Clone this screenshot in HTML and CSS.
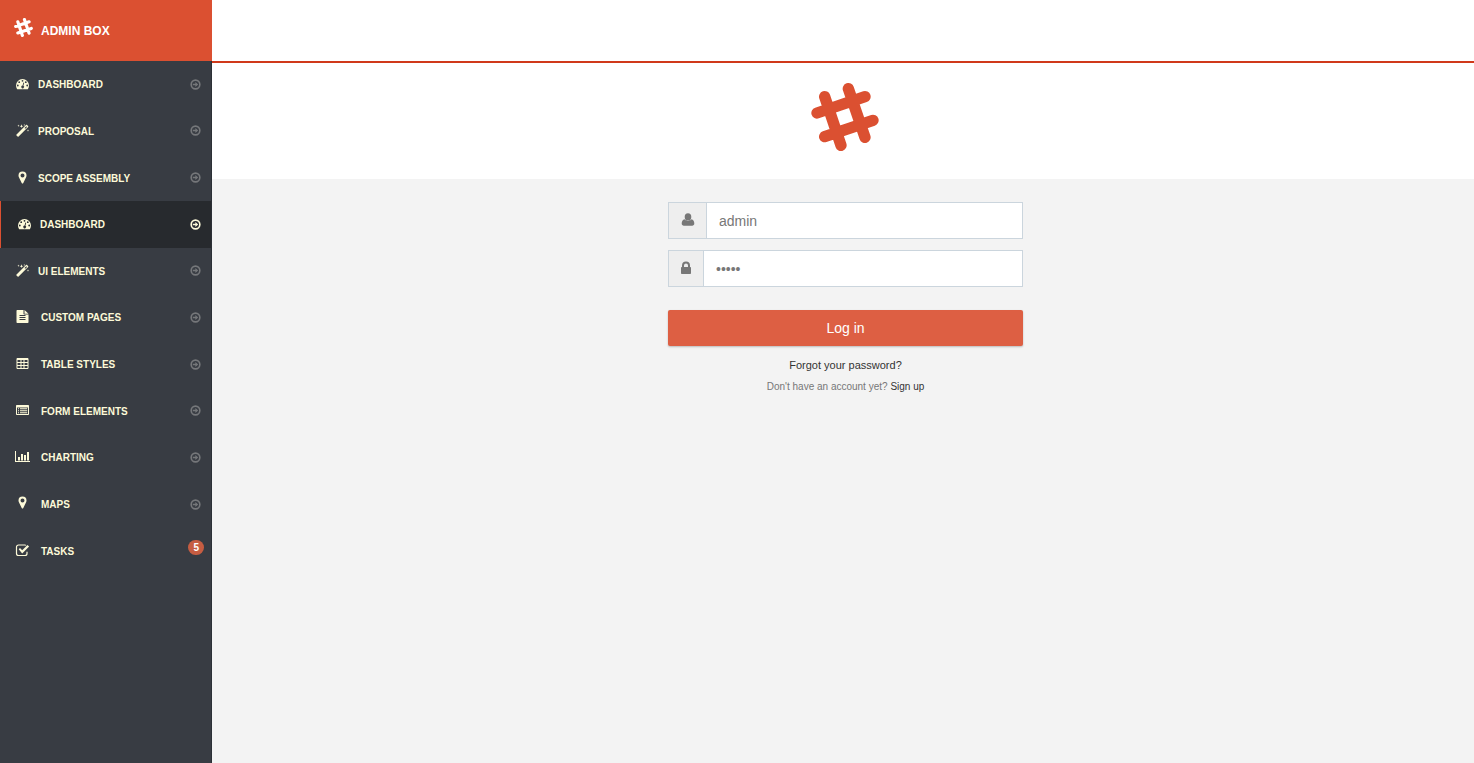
FILE: index.html
```html
<!DOCTYPE html>
<html lang="en">
<head>
<meta charset="utf-8">
<title>Admin Box</title>
<link rel="stylesheet" href="styles.css">
</head>
<body>
<svg class="sprite" aria-hidden="true">
  <symbol id="hash" viewBox="0 0 204 204"><path d="M41 41 90 187M112 17l50 146M18 90l144-49M41 161l145-49" fill="none" stroke="currentColor" stroke-width="34" stroke-linecap="round"/></symbol>
  <symbol id="gauge" viewBox="0 0 14 14"><path fill-rule="evenodd" d="M7 2a6.500 6.500 0 0 1 6.500 6.500c0 1.300-.4 2.500-1 3.500-.1.200-.3.300-.5.300H2c-.2 0-.4-.1-.5-.3-.6-1-1-2.200-1-3.500A6.500 6.500 0 0 1 7 2zM2.300 7.600a.9.900 0 1 0 0 1.800.9.900 0 0 0 0-1.800zM3.700 4.300a.9.900 0 1 0 0 1.800.9.900 0 0 0 0-1.800zM7 2.900a.9.900 0 1 0 0 1.800.9.900 0 0 0 0-1.800zM10.300 4.300a.9.900 0 1 0 0 1.800.9.900 0 0 0 0-1.800zM11.700 7.600a.9.900 0 1 0 0 1.800.9.900 0 0 0 0-1.800zM7.900 5.500 7.100 8.600a1.400 1.400 0 1 0 .8.200l.8-3.100z"/></symbol>
  <symbol id="wand" viewBox="0 1 14 14"><path fill-rule="evenodd" d="M1 11.500 10.500 2c.3-.3.700-.3 1 0l1.100 1.100c.3.300.3.700 0 1L3.100 13.600c-.3.300-.7.300-1 0L1 12.500c-.3-.3-.3-.7 0-1zM9 5.100l.7.700 1.900-1.900-.7-.7zM3 1.500l.3.900.9.300-.9.300L3 3.900 2.700 3l-.9-.3.900-.3zM6 1.300l.5 1.400 1.400.5-1.400.5L6 5.100l-.5-1.400-1.400-.5 1.400-.5zM8.800 1l.2.700.7.200-.7.300-.2.700-.3-.7-.7-.3.7-.2zM12.500 6.300l.3.900.9.300-.9.300-.3.900-.3-.9-.9-.3.900-.3z"/></symbol>
  <symbol id="marker" viewBox="0 0 14 14"><path fill-rule="evenodd" d="M7 .5a4 4 0 0 1 4 4c0 .6-.1 1.100-.3 1.600l-2.900 5.900c-.3.700-1.300.7-1.600 0L3.300 6.100C3.100 5.600 3 5.100 3 4.500a4 4 0 0 1 4-4zm0 2a2 2 0 1 0 0 4 2 2 0 0 0 0-4z"/></symbol>
  <symbol id="file" viewBox="0 0 14 14"><path fill-rule="evenodd" d="M1.700 1H8v3.700c0 .4.300.8.800.8H13v7.700c0 .4-.3.800-.8.800H1.700c-.4 0-.7-.4-.7-.8V1.800c0-.4.300-.8.700-.8zM9 1l4 3.700H9zM4 6v1h6V6zm0 2v1h6V8zm0 2v1h6v-1z"/></symbol>
  <symbol id="table" viewBox="0 0 14 14"><path fill-rule="evenodd" d="M2 2h10c.5 0 1 .5 1 1v9c0 .5-.5 1-1 1H2c-.5 0-1-.5-1-1V3c0-.5.500-1 1-1zM2 4v2h3V4zm4 0v2h2V4zm3 0v2h3V4zM2 7v2h3V7zm4 0v2h2V7zm3 0v2h3V7zM2 10v2h3v-2zm4 0v2h2v-2zm3 0v2h3v-2z"/></symbol>
  <symbol id="list" viewBox="0 0 14 14"><path fill-rule="evenodd" d="M1.500 2h11c.6 0 1 .4 1 1v8c0 .6-.4 1-1 1h-11c-.6 0-1-.4-1-1V3c0-.6.400-1 1-1zM1.500 4.500V11h11V4.500zM2.500 5.300h1v1h-1zm2 0h7.200v1H4.500zm-2 2h1v1h-1zm2 0h7.200v1H4.500zm-2 2h1v1h-1zm2 0h7.200v1H4.500z"/></symbol>
  <symbol id="chart" viewBox="0 0 15 14"><path d="M0 2h1v10h14v1H0zM3 8h2v3.500H3zM6 5h2v6.500H6zM9 6h2v5.500H9zM12 3h2v8.500h-2z"/></symbol>
  <symbol id="check" viewBox="0 0 14 14"><path d="M10.500 2.300C10.200 2 9.800 2 9.400 2H3a2 2 0 0 0-2 2v6.500a2 2 0 0 0 2 2h6.500a2 2 0 0 0 2-2V8.700" fill="none" stroke="currentColor" stroke-width="1.200"/><path d="m3.200 6.300 1.300-1.300 2.200 2.200L12 1.900l1.600 1.600L6.700 10.400z"/></symbol>
  <symbol id="go" viewBox="0 0 12 12"><circle cx="6" cy="6" r="4" fill="none" stroke="currentColor" stroke-width="1.500"/><path d="M3.500 5.300h2.400V3.700L8.500 6 5.900 8.300V6.700H3.500z"/></symbol>
  <symbol id="user" viewBox="0 0 14 14"><path d="M7 .3a3.300 3.600 0 1 1 0 7.200A3.300 3.600 0 0 1 7 .3zM3.600 6.300C4.500 7.400 5.700 7.900 7 7.900s2.500-.5 3.400-1.600c2 .1 2.900 2.300 2.900 4.300 0 1.300-.9 2.100-2.100 2.100H2.800C1.600 12.700.7 11.900.7 10.600c0-2 .9-4.200 2.900-4.300z"/></symbol>
  <symbol id="lock" viewBox="0 0 14 14"><path fill-rule="evenodd" d="M3 6V4.600a4 4 0 0 1 8 0V6h.2c.5 0 .8.400.8.800v5.400c0 .4-.3.800-.8.800H2.800c-.5 0-.8-.4-.8-.8V6.800c0-.4.300-.8.800-.8zm2 0h4V4.600a2 2 0 0 0-4 0z"/></symbol>
</svg>
<div class="app">
  <aside class="sidebar">
    <a class="brand" href="#"><svg class="brand-icon"><use href="#hash"/></svg><span>ADMIN BOX</span></a>
    <nav class="menu" aria-label="Main">
      <a class="item" href="#"><svg class="icon"><use href="#gauge"/></svg><span class="label">DASHBOARD</span><svg class="go"><use href="#go"/></svg></a>
      <a class="item" href="#"><svg class="icon"><use href="#wand"/></svg><span class="label">PROPOSAL</span><svg class="go"><use href="#go"/></svg></a>
      <a class="item" href="#"><svg class="icon"><use href="#marker"/></svg><span class="label">SCOPE ASSEMBLY</span><svg class="go"><use href="#go"/></svg></a>
      <a class="item active" href="#" aria-current="page"><svg class="icon"><use href="#gauge"/></svg><span class="label">DASHBOARD</span><svg class="go"><use href="#go"/></svg></a>
      <a class="item" href="#"><svg class="icon"><use href="#wand"/></svg><span class="label">UI ELEMENTS</span><svg class="go"><use href="#go"/></svg></a>
      <a class="item wide" href="#"><svg class="icon"><use href="#file"/></svg><span class="label">CUSTOM PAGES</span><svg class="go"><use href="#go"/></svg></a>
      <a class="item wide" href="#"><svg class="icon"><use href="#table"/></svg><span class="label">TABLE STYLES</span><svg class="go"><use href="#go"/></svg></a>
      <a class="item wide" href="#"><svg class="icon"><use href="#list"/></svg><span class="label">FORM ELEMENTS</span><svg class="go"><use href="#go"/></svg></a>
      <a class="item wide" href="#"><svg class="icon"><use href="#chart"/></svg><span class="label">CHARTING</span><svg class="go"><use href="#go"/></svg></a>
      <a class="item wide" href="#"><svg class="icon"><use href="#marker"/></svg><span class="label">MAPS</span><svg class="go"><use href="#go"/></svg></a>
      <a class="item wide" href="#"><svg class="icon"><use href="#check"/></svg><span class="label">TASKS</span><span class="badge">5</span></a>
    </nav>
  </aside>
  <main class="main">
    <header class="topbar"></header>
    <div class="hero"><svg class="logo" role="img" aria-label="Admin Box"><use href="#hash"/></svg></div>
    <form class="login">
      <div class="field"><label class="addon" for="user-name" aria-label="User name"><svg class="field-icon"><use href="#user"/></svg></label><input id="user-name" type="text" placeholder="admin"></div>
      <div class="field"><label class="addon narrow" for="password" aria-label="Password"><svg class="field-icon"><use href="#lock"/></svg></label><input id="password" type="password" placeholder="•••••"></div>
      <button class="submit" type="submit">Log in</button>
      <a class="forgot" href="#">Forgot your password?</a>
      <p class="signup">Don't have an account yet? <a href="#">Sign up</a></p>
    </form>
  </main>
</div>
</body>
</html>
```
FILE: styles.css
```css
* { box-sizing: border-box; }
body { margin: 0; font-family: "Liberation Sans", Arial, sans-serif; font-size: 12px; color: #777; background: #f3f3f3; }
a { color: #333; text-decoration: none; }
svg { display: block; fill: currentColor; flex: none; }
.sprite { display: none; }
.app { display: grid; grid-template-columns: 212px 1fr; min-height: 100vh; }
.sidebar { background: #383c43; border-right: 1px solid #2c3036; }
.brand { display: flex; align-items: center; gap: 8px; height: 61px; margin-right: -1px; padding-left: 14px; background: #db5031; color: #fff; font-weight: bold; }
.brand-icon { width: 19px; height: 19px; margin-bottom: 6px; }
.menu { display: grid; grid-template-rows: repeat(11, 1fr); height: 513px; }
.item { display: flex; align-items: center; padding: 0 9px 0 15px; color: #fdfad9; font-size: 10px; font-weight: bold; }
.icon { width: 15px; height: 14px; margin-right: 8px; }
.wide .icon { margin-right: 11px; margin-bottom: 2px; }
.label { flex: 1; padding-top: 1px; }
.go { width: 13px; height: 13px; color: #75777a; }
.active { background: #272a2e; border-left: 1px solid #db5031; padding-left: 16px; }
.active .go { color: #fdfad9; }
.badge { margin: 0 -2px 6px 0; padding: 1px 5px; border-radius: 8px; background: #c65d42; color: #fff; font-size: 10px; line-height: 13px; }
.topbar { height: 63px; background: #fff; border-bottom: 2px solid #d0391a; }
.hero { display: flex; justify-content: center; padding: 20px 0 28px 4px; background: #fff; color: #db5031; }
.logo { width: 68px; height: 68px; }
.login { display: flex; flex-direction: column; width: 360px; max-width: 100%; margin: 23px auto 0; padding-left: 5px; }
.field { display: flex; height: 37px; margin-bottom: 11px; border: 1px solid #cbd5dd; }
.addon { display: flex; align-items: center; justify-content: center; width: 38px; background: #eee; border-right: 1px solid #cbd5dd; color: #777; }
.narrow { width: 35px; }
.field-icon { width: 14px; height: 14px; margin-bottom: 2px; }
.field input { flex: 1; min-width: 0; padding: 0 12px; border: 0; background: #fff; font: 14px "Liberation Sans", Arial, sans-serif; color: #555; }
.field input::placeholder { color: #777; opacity: 1; }
.submit { height: 36px; margin-top: 12px; border: 0; border-radius: 2px; background: #dd5f43; box-shadow: 0 1px 2px #bbb; color: #fff; font: 14px "Liberation Sans", Arial, sans-serif; }
.forgot { margin-top: 11px; text-align: center; font-size: 11px; line-height: 16px; }
.signup { margin: 6px 0 0; text-align: center; font-size: 10px; line-height: 16px; }
```
